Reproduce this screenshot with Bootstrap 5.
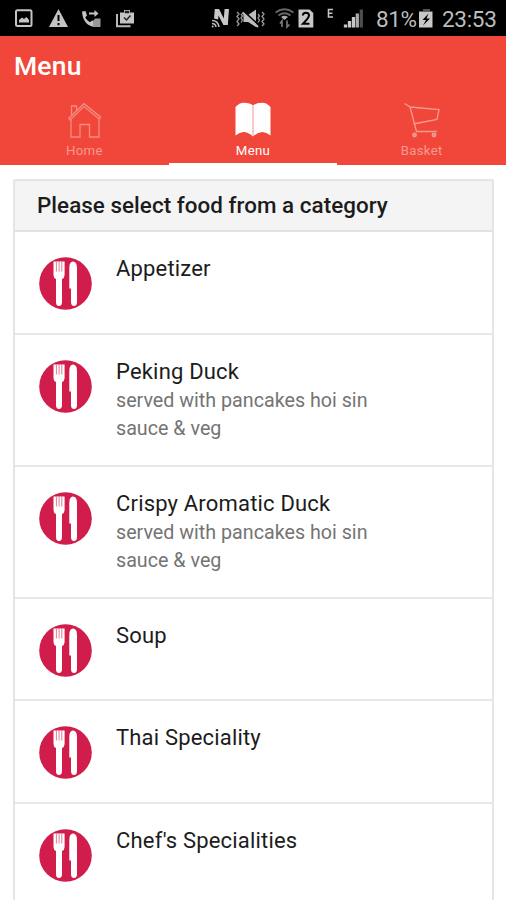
<!DOCTYPE html>
<html lang="en">
<head>
<meta charset="utf-8">
<meta name="viewport" content="width=device-width, initial-scale=1">
<title>Menu</title>
<link href="https://cdn.jsdelivr.net/npm/bootstrap@5.3.0/dist/css/bootstrap.min.css" rel="stylesheet">
<style>
html, body { height: 900px; overflow: hidden; }
body { font-family: Roboto, "Liberation Sans", sans-serif; background: #fff; color: #1c1c1c; }
svg { display: block; flex: none; }
.status { height: 36px; background: #000; color: #bdbdbd; padding-left: 15px; font-size: 22.5px; line-height: 38px; white-space: nowrap; }
.status svg { height: 36px; }
.pct { width: 43px; letter-spacing: -.35px; }
.clock { width: 56px; letter-spacing: -.3px; }
.appbar { height: 129px; background: #f1473a; color: #fff; }
.apptitle { font-size: 26.5px; font-weight: 500; line-height: 30px; padding: 15px 0 0 14px; height: 60px; letter-spacing: .2px; }
.apptabs { height: 69px; }
.apptabs .nav-link { padding: 4px 0 0; height: 69px; color: #f7998f; font-size: 13.2px; line-height: 16px; border-radius: 0; border-bottom: 2px solid transparent; letter-spacing: .3px; }
.apptabs .nav-link.active { color: #fff; border-bottom-color: #fff; letter-spacing: .35px; }
.apptabs svg { height: 40px; width: 40px; margin: 0 auto 3px; }
.menucard { margin: 14px 12px 0 13px; border: 2px solid #e5e5e5; border-radius: 2px; }
.menuhead { height: 51px; padding: 8px 0 0 22px; background: #f4f4f4; border-bottom: 2px solid #e2e2e2; font-size: 22.4px; font-weight: 500; line-height: 32px; letter-spacing: .05px; }
.list-group > .dish.list-group-item { border: 0; border-bottom: 2px solid #e8e8e8; padding: 23px 23px 0 24px; height: 102.6px; color: #1c1c1c; gap: 24px; }
.list-group > .dish.tall.list-group-item { height: 132px; }
.dish svg { width: 53px; height: 53px; margin-top: 2px; }
.dishname { font-size: 22px; line-height: 28px; letter-spacing: .18px; }
.dishnote { font-size: 19.7px; line-height: 28.3px; color: #747474; width: 270px; letter-spacing: 0; padding-top: 1px; }
</style>
<script src="https://cdn.jsdelivr.net/npm/bootstrap@5.3.0/dist/js/bootstrap.bundle.min.js"></script>
</head>
<body>
<svg width="0" height="0" class="d-none" aria-hidden="true">
  <symbol id="cutlery" viewBox="0 0 53 53">
    <circle cx="26.5" cy="26.5" r="26.3" fill="#d11d4b"/>
    <path d="M14.500 4.500V18Q14.500 21 17 22V45Q17 49 19.900 49Q23 49 23 45V22Q25.600 21 25.600 18V4.500Z" fill="#fff"/>
    <path d="M17.400 4.500V14.500M20.100 4.500V14.500M22.800 4.500V14.500" stroke="#e27a95" stroke-width="1"/>
    <path d="M30.300 31.500V11Q30.300 4.500 34 4.500Q38 4.500 38 11V45Q38 49 35 49Q32 49 32 45V31.500Z" fill="#fff"/>
  </symbol>
</svg>

<div class="status d-flex">
  <svg width="18" viewBox="15 0 18 36" fill="none"><rect x="16" y="10.200" width="15.500" height="15.800" rx="1.500" stroke="#c4c4c4" stroke-width="2"/><path d="M19 22.500V20L22 17.500L24 19L26.500 17L29 20V22.500Z" fill="#c4c4c4"/></svg>
  <svg width="20" viewBox="48 0 20 36" class="ms-3"><path d="M57.500 9L67 27H48Z" fill="#c4c4c4"/><path d="M57.500 15V21M57.500 23V25.200" stroke="#000" stroke-width="2"/></svg>
  <svg width="20" viewBox="81 0 20 36" style="margin-left:12px"><path d="M82 11.500L85.500 11L87 15.500L85.200 17.500Q87 20.800 90 22.300L92 20.500L94 21V27Q83 25 82 11.500Z" fill="#c4c4c4"/><path d="M89 13.500H96" stroke="#c4c4c4" stroke-width="2"/><path d="M94.500 10L98.500 13.500L94.500 17Z" fill="#c4c4c4"/><path d="M93 21L95 18.500H100.500V27H93Z" fill="#999"/></svg>
  <svg width="19" viewBox="116 0 19 36" style="margin-left:15px"><path d="M117 14V26.200H130.500" fill="none" stroke="#b8b8b8" stroke-width="2"/><path d="M120 12.500H124V10H130V12.500H134V23.500H120Z" fill="#c4c4c4"/><path d="M125.500 12.500V11.500H128.500V12.500ZM124 17.500L126.500 20L130.500 15.500" fill="none" stroke="#222" stroke-width="1.500"/></svg>
  <svg width="19" viewBox="211 0 19 36" class="ms-auto"><path d="M214 18.500L214.800 9H219L223.800 18.500L224.600 9H229L227.800 25H223.400L218.500 15.500L218.200 19.500Z" fill="#c8c8c8"/><path d="M212 20.500Q218 20.500 219 27M212 23.500Q215.500 23.500 216 27" fill="none" stroke="#bbb" stroke-width="1.600"/><circle cx="212.700" cy="26.500" r="1" fill="#bbb"/></svg>
  <svg width="29" viewBox="236 0 29 36" style="margin-left:6px"><path d="M243.500 15H248L256 9.500V27L248 22H243.500Z" fill="#bdbdbd"/><path d="M244.500 12L259 25.500" stroke="#000" stroke-width="1.800"/><path d="M242.500 12.500L258 27" stroke="#bdbdbd" stroke-width="2.200"/><path d="M237 12L239 14L237 16.500L239 19L237 21.500L239 24L237 26M241 14L242.500 16L241 18L242.500 20L241 22.500M258 14L259.500 16L258 18L259.500 20L258 22.500M262 12L264 14L262 16.500L264 19L262 21.500L264 24L262 26" stroke="#999" fill="none" stroke-width="1.300"/></svg>
  <svg width="19" viewBox="275 0 19 36" style="margin-left:10px" fill="none"><path d="M275.500 12.500Q284.300 6 293.500 12.500M278.500 15.500Q284.500 11 290.500 15.500" stroke="#666" stroke-width="2"/><path d="M281 17Q284.500 14.500 288 17L284.500 20Z" fill="#aaa"/><path d="M282 27V21L280 23.500M287 20.500V27L289.500 24.500" stroke="#777" stroke-width="1.700"/></svg>
  <svg width="16" viewBox="298 0 16 36" style="margin-left:4px"><path d="M298.500 9.500H309.500L313.300 13V27.500H298.500Z" fill="#c8c8c8"/><path d="M302.800 15.500Q303 12.700 305.900 12.700Q309 12.700 309 15.500Q309 17.500 303 23.800H309.500" fill="none" stroke="#000" stroke-width="2"/></svg>
  <svg width="7" viewBox="327 0 7 36" style="margin-left:13px"><path d="M333 9.500H328.500V17H333M328.500 13.200H332.500" fill="none" stroke="#c4c4c4" stroke-width="1.600"/></svg>
  <svg width="21" viewBox="343 0 21 36" style="margin-left:9px" stroke-width="3.300"><path d="M345.500 27.500V24.500M349.500 27.500V21M353.500 27.500V17" stroke="#c8c8c8"/><path d="M357.300 27.500V13.500" stroke="#aaa"/><path d="M361.300 27.500V9.500" stroke="#4d4d4d"/></svg>
  <span class="pct ms-2 ps-1 me-1">81%</span>
  <svg width="15" viewBox="421 0 15 36"><path d="M425 9H432V11H425Z" fill="#555"/><path d="M421 11.500H434.500V27.500H421Z" fill="#c8c8c8"/><path d="M430.500 13.500L424.500 20H428L425 25.500L432 18.500H428.500Z" fill="#000"/></svg>
  <span class="clock ms-2 me-2">23:53</span>
</div>

<header class="appbar">
  <div class="apptitle">Menu</div>
  <nav class="apptabs nav nav-fill flex-nowrap">
    <a class="nav-link nav-item w-100" href="#"><svg viewBox="0 0 40 40" fill="none" stroke="#f68c81" stroke-width="1.300"><path d="M4.800 18.200L20 3.700L36.500 17L35.300 19L20 6.500L6 20ZM7.500 16V6H12.500V11M7 19.500V37H16V24.500H25.500V37H35V19.500"/></svg>Home</a>
    <a class="nav-link nav-item w-100 active" href="#"><svg viewBox="0 0 40 40"><path d="M2.500 7Q6 2.700 11 2.700Q17 2.700 20 5.500Q23 2.700 29 2.700Q34 2.700 37.500 7V35.500Q29 28 20 36.500Q11 28 2.500 35.500Z" fill="#fff"/><path d="M20 5.500V35.500" stroke="#f8b8b2" stroke-width="1.500"/></svg>Menu</a>
    <a class="nav-link nav-item w-100" href="#"><svg viewBox="0 0 40 40" fill="none" stroke="#f7998f" stroke-width="1.300"><path d="M2.500 3.500L8 7L14.500 31.500H35M8 7L37 9.500L35 19.500L11.500 24"/><circle cx="12.500" cy="35" r="1.800" fill="#f68c81"/><circle cx="32" cy="35" r="1.800" fill="#f68c81"/></svg>Basket</a>
  </nav>
</header>

<main class="menucard">
  <h1 class="menuhead mb-0">Please select food from a category</h1>
  <div class="list-group list-group-flush">
    <a href="#" class="list-group-item dish d-flex align-items-start"><svg><use href="#cutlery"/></svg><div class="dishname">Appetizer</div></a>
    <a href="#" class="list-group-item dish tall d-flex align-items-start"><svg><use href="#cutlery"/></svg><div><div class="dishname">Peking Duck</div><div class="dishnote">served with pancakes hoi sin sauce &amp; veg</div></div></a>
    <a href="#" class="list-group-item dish tall d-flex align-items-start"><svg><use href="#cutlery"/></svg><div><div class="dishname">Crispy Aromatic Duck</div><div class="dishnote">served with pancakes hoi sin sauce &amp; veg</div></div></a>
    <a href="#" class="list-group-item dish d-flex align-items-start"><svg><use href="#cutlery"/></svg><div class="dishname">Soup</div></a>
    <a href="#" class="list-group-item dish d-flex align-items-start"><svg><use href="#cutlery"/></svg><div class="dishname">Thai Speciality</div></a>
    <a href="#" class="list-group-item dish d-flex align-items-start"><svg><use href="#cutlery"/></svg><div class="dishname">Chef's Specialities</div></a>
  </div>
</main>
</body>
</html>
